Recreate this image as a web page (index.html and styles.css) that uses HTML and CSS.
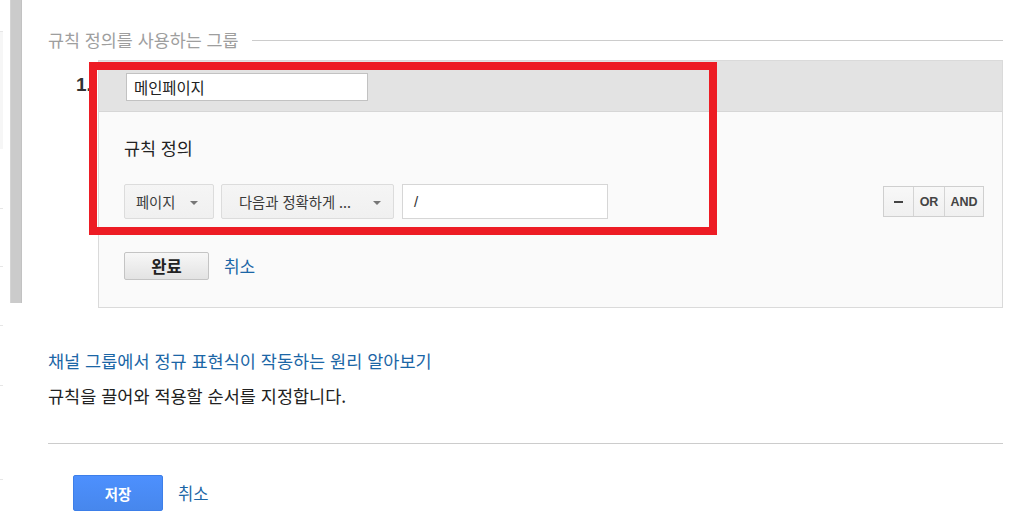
FILE: index.html
```html
<!DOCTYPE html>
<html lang="ko">
<head>
<meta charset="utf-8">
<link rel="stylesheet" href="styles.css">
</head>
<body>
<div class="page">
  <div class="gutter">
    <div class="mark m1"></div>
    <div class="shade"></div>
    <div class="mark m2"></div>
    <div class="mark m3"></div>
    <div class="mark m4"></div>
    <div class="mark m5"></div>
    <div class="mark m6"></div>
  </div>
  <div class="scrollbar"></div>
  <div class="main">
    <div class="legend">
      <span class="legend-text">규칙 정의를 사용하는 그룹</span>
      <span class="legend-line"></span>
    </div>

    <div class="rule-row">
      <div class="rule-num">1.</div>
      <div class="panel">
        <div class="panel-head">
          <div class="name-input">메인페이지</div>
        </div>
        <div class="panel-body">
          <div class="heading">규칙 정의</div>
          <div class="controls">
            <div class="select s1"><span>페이지</span><span class="arrow"></span></div>
            <div class="select s2"><span>다음과 정확하게 ...</span><span class="arrow"></span></div>
            <div class="text-input">/</div>
            <div class="seg">
              <div class="seg-btn minus"><span class="dash"></span></div>
              <div class="seg-btn or">OR</div>
              <div class="seg-btn and">AND</div>
            </div>
          </div>
          <div class="actions">
            <div class="btn-done">완료</div>
            <span class="link cancel">취소</span>
          </div>
        </div>
        <div class="highlight"></div>
      </div>
    </div>

    <div class="help-link">채널 그룹에서 정규 표현식이 작동하는 원리 알아보기</div>
    <div class="help-text">규칙을 끌어와 적용할 순서를 지정합니다.</div>
    <div class="divider"></div>
    <div class="footer">
      <div class="btn-save">저장</div>
      <span class="link cancel2">취소</span>
    </div>
  </div>
</div>
</body>
</html>
```

FILE: styles.css
```css
html, body {
  margin: 0;
  padding: 0;
  background: #ffffff;
}

body {
  font-family: "Noto Sans CJK KR", "Noto Sans", sans-serif;
  color: #222222;
  width: 1027px;
  height: 523px;
  overflow: hidden;
}

.page {
  display: flex;
  align-items: flex-start;
}

.gutter {
  width: 10px;
  display: flex;
  flex-direction: column;
}

.mark {
  width: 3px;
  height: 1px;
  background: #e6e6e6;
}

.m1 { margin-top: 31px; }
.shade { width: 3px; height: 117px; background: #f6f6f6; }
.m2 { margin-top: 59px; }
.m3 { margin-top: 57px; }
.m4 { margin-top: 58px; }
.m5 { margin-top: 59px; }
.m6 { margin-top: 93px; }

.scrollbar {
  width: 12px;
  height: 303px;
  background: #cbcbcb;
  box-shadow: inset 1px 0 0 #d4d4d4, inset -1px 0 0 #c2c2c2;
}

.main {
  margin-left: 26px;
  width: 955px;
  display: flex;
  flex-direction: column;
}

.legend {
  margin-top: 30px;
  height: 20px;
  display: flex;
  align-items: center;
}

.legend-text {
  font-size: 17.4px;
  line-height: 20px;
  color: #9e9e9e;
  white-space: nowrap;
}

.legend-line {
  flex: 1;
  height: 1px;
  background: #cccccc;
  margin-left: 13px;
}

.rule-row {
  margin-top: 10px;
  display: flex;
  align-items: flex-start;
}

.rule-num {
  width: 50px;
  box-sizing: border-box;
  padding-left: 28px;
  padding-top: 14px;
  font-family: "Liberation Sans", Arial, sans-serif;
  font-weight: bold;
  font-size: 19px;
  line-height: 22px;
  color: #333333;
}

.panel {
  position: relative;
  width: 906px;
  box-sizing: border-box;
  border: 1px solid #dadada;
  background: #fafafa;
}

.panel-head {
  background: #e3e3e3;
  border-bottom: 1px solid #d6d6d6;
  padding: 12px 0 10px 27px;
}

.name-input {
  width: 242px;
  height: 28px;
  box-sizing: border-box;
  background: #ffffff;
  border: 1px solid #c2c2c2;
  padding-left: 7px;
  font-size: 15.4px;
  line-height: 26px;
  color: #222222;
}

.panel-body {
  padding: 24px 18px 27px 25px;
}

.heading {
  font-size: 17.4px;
  line-height: 24px;
  color: #222222;
}

.controls {
  margin-top: 24px;
  height: 35px;
  display: flex;
  align-items: center;
}

.select {
  height: 35px;
  box-sizing: border-box;
  border: 1px solid #dcdcdc;
  border-radius: 2px;
  background: linear-gradient(#f5f5f5, #f0f0f0);
  display: flex;
  align-items: center;
  font-size: 14.3px;
  color: #3a3a3a;
}

.s1 {
  width: 90px;
  padding-left: 11px;
}

.s1 .arrow { margin-left: 15px; }

.s2 {
  width: 173px;
  margin-left: 7px;
  padding-left: 17px;
}

.s2 .arrow { margin-left: 22px; }

.arrow {
  width: 0;
  height: 0;
  border-left: 4px solid transparent;
  border-right: 4px solid transparent;
  border-top: 4px solid #777777;
  margin-top: 2px;
}

.text-input {
  margin-left: 8px;
  width: 206px;
  height: 35px;
  box-sizing: border-box;
  border: 1px solid #d6d6d6;
  background: #ffffff;
  padding-left: 11px;
  font-family: "Liberation Sans", Arial, sans-serif;
  font-size: 15px;
  line-height: 33px;
  color: #333333;
}

.seg {
  margin-left: auto;
  display: flex;
  height: 31px;
  border: 1px solid #cfcfcf;
  box-sizing: border-box;
  background: linear-gradient(#f8f8f8, #f0f0f0);
}

.seg-btn {
  display: flex;
  align-items: center;
  justify-content: center;
  font-family: "Liberation Sans", Arial, sans-serif;
  font-weight: bold;
  font-size: 12.5px;
  color: #444444;
}

.minus { width: 29px; }

.dash {
  width: 9px;
  height: 2px;
  background: #444444;
}

.or { width: 30px; border-left: 1px solid #d4d4d4; }
.and { width: 38px; border-left: 1px solid #d4d4d4; }

.actions {
  margin-top: 33px;
  display: flex;
  align-items: center;
}

.btn-done {
  width: 85px;
  height: 28px;
  box-sizing: border-box;
  border: 1px solid #c4c4c4;
  border-radius: 2px;
  background: linear-gradient(#f7f7f7, #e3e3e3);
  display: flex;
  align-items: center;
  justify-content: center;
  font-size: 16.6px;
  font-weight: bold;
  color: #222222;
}

.link {
  color: #1b66a6;
}

.cancel {
  margin-left: 15px;
  font-size: 17px;
  line-height: 24px;
}

.highlight {
  position: absolute;
  left: -10px;
  top: 1px;
  width: 628px;
  height: 173px;
  box-sizing: border-box;
  border: 8px solid #ed1c24;
  pointer-events: none;
}

.help-link {
  margin-top: 41px;
  font-size: 17.5px;
  line-height: 24px;
  color: #1b66a6;
}

.help-text {
  margin-top: 11px;
  font-size: 17.5px;
  line-height: 24px;
  color: #222222;
}

.divider {
  margin-top: 35px;
  height: 1px;
  background: #cccccc;
}

.footer {
  margin-top: 31px;
  margin-left: 25px;
  display: flex;
  align-items: center;
}

.btn-save {
  width: 90px;
  height: 36px;
  box-sizing: border-box;
  border: 1px solid #3d7fe9;
  border-radius: 2px;
  background: linear-gradient(#4d90fe, #4787ed);
  display: flex;
  align-items: center;
  justify-content: center;
  color: #ffffff;
  font-weight: bold;
  font-size: 14.4px;
}

.cancel2 {
  margin-left: 15px;
  font-size: 16.6px;
  line-height: 24px;
}
```
